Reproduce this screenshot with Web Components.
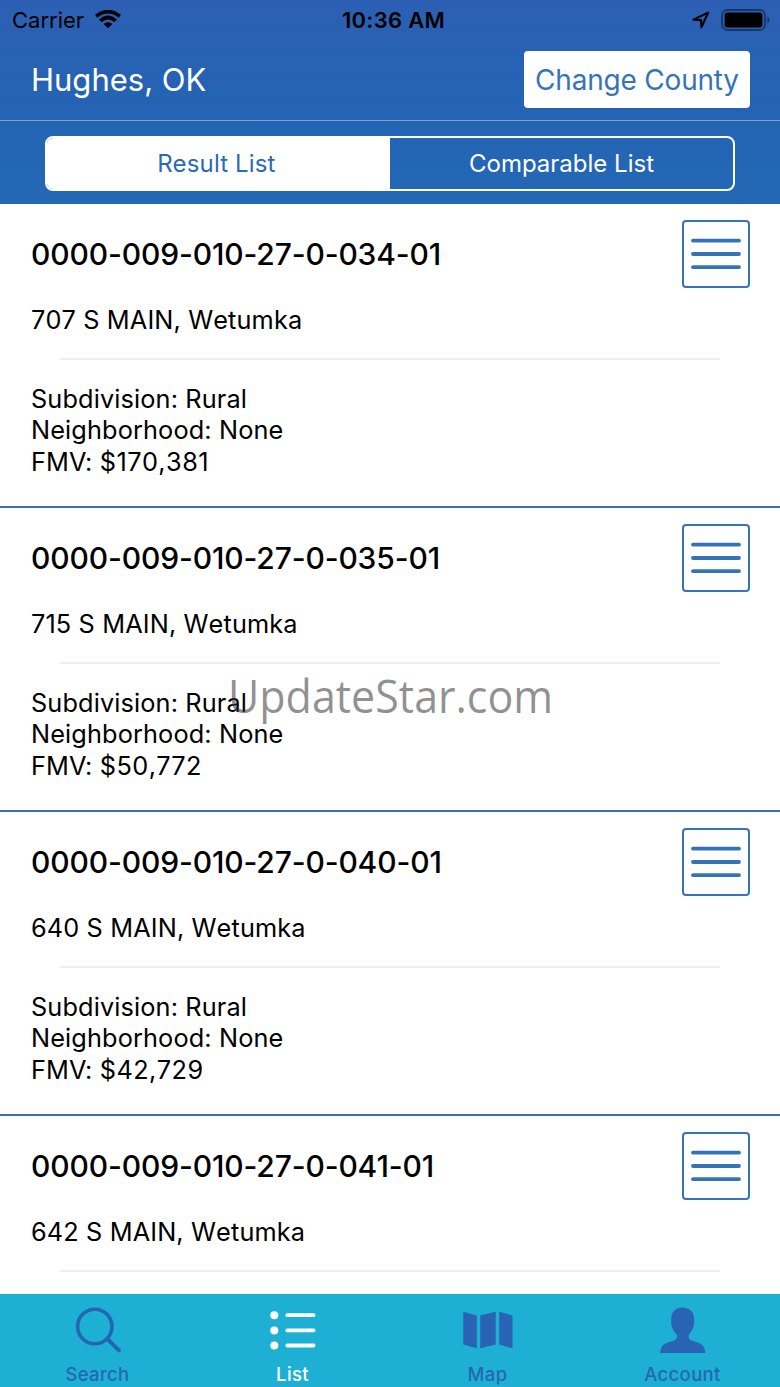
<!DOCTYPE html>
<html lang="en">
<head>
<meta charset="utf-8">
<title>Hughes, OK</title>
<style>
    html, body {
        margin: 0;
        height: 100%;
        overflow: hidden;
        background: #fff;
    }
</style>
</head>
<body>
<county-app></county-app>

<script>
function define(name, html, setup) {
    const template = document.createElement('template');
    template.innerHTML = html;
    customElements.define(name, class extends HTMLElement {
        constructor() {
            super();
            this.root = this.attachShadow({ mode: 'open' });
            this.root.appendChild(template.content.cloneNode(true));
        }
        connectedCallback() {
            if (setup) setup(this.root, this);
        }
    });
}

define('status-bar', `
<style>
    :host {
        display: grid;
        grid-template-columns: 1fr auto 1fr;
        align-items: center;
        height: 40px;
        padding: 0 10px 0 12px;
        color: #000;
        font-size: 22px;
    }
    .left, .right { display: flex; align-items: center; }
    .left { gap: 11px; }
    .right { justify-content: flex-end; gap: 11px; }
    .time { padding-left: 5px; font-weight: 600; letter-spacing: 0.3px; }
    svg { display: block; }
</style>
<div class="left">
    <span>Carrier</span>
    <svg width="26" height="20" viewBox="0 1 26 20">
        <g fill="none" stroke="#000" stroke-width="3.8">
            <path d="M1.2 7.2Q13 -2 24.8 7.2"/>
            <path d="M5.3 11.9Q13 5.2 20.7 11.9"/>
        </g>
        <path d="M8.6 15Q13 11.4 17.4 15L13 19.2Z"/>
    </svg>
</div>
<div class="time">10:36 AM</div>
<div class="right">
    <svg width="18" height="18" viewBox="0 0 18 18">
        <path d="M1.4 8.6L16.2 1.6L9.4 16.2L9 9.1Z" fill="none" stroke="#000" stroke-width="2.1" stroke-linejoin="round"/>
    </svg>
    <svg width="49" height="22" viewBox="0 0 49 22">
        <rect x="1" y="1" width="43" height="20" rx="5.5" fill="none" stroke="#173765" stroke-width="1.8"/>
        <rect x="3.6" y="3.6" width="37.8" height="14.8" rx="3"/>
        <path d="M46.3 7.6Q48.7 8.8 48.7 11T46.3 14.4Z" fill="#173765"/>
    </svg>
</div>
`);

define('county-header', `
<style>
    :host {
        display: flex;
        align-items: center;
        justify-content: space-between;
        box-sizing: border-box;
        height: 81px;
        padding: 0 30px 1px 31px;
        border-bottom: 1px solid #7b9fd1;
        color: #fff;
    }
    .name { font-size: 31px; }
    button {
        box-sizing: border-box;
        width: 226px;
        height: 57px;
        padding: 0;
        border: 0;
        border-radius: 4px;
        background: #fff;
        color: #3773b9;
        font: inherit;
        font-size: 28px;
        letter-spacing: -0.2px;
    }
</style>
<div class="name"><slot></slot></div>
<button>Change County</button>
`);

define('list-switch', `
<style>
    :host {
        display: flex;
        box-sizing: border-box;
        height: 83px;
        padding: 15px 45px 13px;
    }
    .box {
        flex: 1;
        display: grid;
        grid-template-columns: 1fr 1fr;
        border: 2px solid #fff;
        border-radius: 8px;
        overflow: hidden;
        color: #fff;
        font-size: 24px;
    }
    .box div { display: grid; place-items: center; }
    .box .on { padding-right: 4px; background: #fff; color: #2b6ab7; letter-spacing: 0.15px; }
</style>
<div class="box">
    <div class="on"><span>Result List</span></div>
    <div class="off"><span>Comparable List</span></div>
</div>
`);

define('menu-button', `
<style>
    :host {
        display: grid;
        place-items: center;
        box-sizing: border-box;
        width: 68px;
        height: 68px;
        border: 2px solid #3573be;
        border-radius: 4px;
    }
</style>
<svg width="50" height="32" viewBox="0 0 50 32">
    <path d="M2 2.7H48M2 16H48M2 29.2H48" stroke="#3573b9" stroke-width="3.8" stroke-linecap="round"/>
</svg>
`);

define('parcel-item', `
<style>
    :host {
        display: block;
        box-sizing: border-box;
        height: 304px;
        padding: 16px 30px 0 31px;
        border-bottom: 2px solid #3a6fb8;
        color: #000;
    }
    .top { display: flex; justify-content: space-between; align-items: center; }
    .id { font-size: 30px; font-weight: 500; letter-spacing: -0.13px; }
    .address, .facts { font-size: 25.3px; letter-spacing: 0.13px; }
    .address { margin-top: 16px; line-height: 32px; }
    hr { margin: 22px 30px 23px 29px; border: 0; height: 2px; background: #ededee; }
    .facts { line-height: 31.4px; }
    .address, .amount { font-kerning: none; }
    .amount { letter-spacing: 0.45px; }
</style>
<div class="top">
    <div class="id"></div>
    <menu-button></menu-button>
</div>
<div class="address"><slot></slot></div>
<hr>
<div class="facts">
    <div>Subdivision: Rural</div>
    <div>Neighborhood: None</div>
    <div>FMV: <span class="amount"></span></div>
</div>
`, (root, el) => {
    root.querySelector('.id').textContent = el.getAttribute('parcel');
    // no value yet: leave the lower half empty
    if (el.hasAttribute('fmv')) {
        root.querySelector('.amount').textContent = el.getAttribute('fmv');
    } else {
        root.querySelector('.facts').remove();
    }
});

define('tab-item', `
<style>
    :host {
        display: flex;
        flex-direction: column;
        align-items: center;
        padding-top: 11px;
        color: #2767b2;
        font-size: 18.5px;
        font-weight: 500;
        letter-spacing: 0.35px;
    }
    :host([active]) { color: #fff; }
    .icon { height: 50px; }
    .label { margin-top: 7px; line-height: 24px; }
</style>
<div class="icon"><slot name="icon"></slot></div>
<div class="label"><slot></slot></div>
`);

define('tab-bar', `
<style>
    :host {
        display: grid;
        grid-template-columns: repeat(4, 1fr);
        height: 93px;
        background: #1eb0d4;
    }
    svg { display: block; }
</style>
<tab-item>
    <svg slot="icon" width="52" height="50" viewBox="0 0 52 50" fill="none" stroke="#2565b4" stroke-width="3.6" stroke-linecap="round">
        <circle cx="22.8" cy="21.5" r="17.2"/>
        <path d="M35.5 34L47 45.4" stroke-width="4"/>
    </svg>
    Search
</tab-item>
<tab-item active>
    <svg slot="icon" width="46" height="50" viewBox="0 0 46 50" fill="#fff">
        <circle cx="4.3" cy="10.2" r="4"/>
        <circle cx="4.3" cy="25.4" r="4"/>
        <circle cx="4.3" cy="40.5" r="4"/>
        <path d="M17.3 10.2H43.6M17.3 25.4H43.6M17.3 40.5H43.6" stroke="#fff" stroke-width="3.8" stroke-linecap="round"/>
    </svg>
    List
</tab-item>
<tab-item>
    <svg slot="icon" width="50" height="50" viewBox="0 0 50 50" fill="#2863b4">
        <path d="M.3 6.8L13.8 10.5V43.2L.3 39.4Z"/>
        <path d="M17.2 10.5L32.7 6.8V39.4L17.2 43.2Z"/>
        <path d="M36.2 6.8L49.5 10.5V43.4L36.2 39.4Z"/>
    </svg>
    Map
</tab-item>
<tab-item>
    <svg slot="icon" width="46" height="50" viewBox="0 0 46 50" fill="#2863b4">
        <path d="M22.5 2.5C28.5 2.5 34 6.5 34 13C34 16 34.5 17 33.9 20C33.3 23.5 31 27 28.5 30C28.5 32 28.8 34 30.5 35C35 37.5 45.3 37 45.3 48H.3C.3 37 10.6 37.5 15.1 35C16.8 34 17 32 17 30C14 27 12 23.5 11.5 20C11 17 11.3 16 11.3 13C11.3 6.5 16.5 2.5 22.5 2.5Z"/>
    </svg>
    Account
</tab-item>
`);

define('county-app', `
<style>
    :host {
        display: flex;
        flex-direction: column;
        position: relative;
        width: 780px;
        height: 1387px;
        overflow: hidden;
        font-family: Inter, "Liberation Sans", sans-serif;
    }
    header { background: linear-gradient(#2c5fb3, #2463b3 50%, #2368b5); }
    main { flex: 1; min-height: 0; overflow: hidden; }
    .watermark {
        position: absolute;
        left: 228px;
        top: 664px;
        font: 45px/64px "Open Sans", "Noto Sans", sans-serif;
        color: rgba(60, 60, 60, 0.57);
        white-space: nowrap;
        transform: scaleX(0.955);
        transform-origin: left;
    }
</style>
<header>
    <status-bar></status-bar>
    <county-header>Hughes, OK</county-header>
    <list-switch></list-switch>
</header>
<main>
    <parcel-item parcel="0000-009-010-27-0-034-01" fmv="$170,381">707 S MAIN, Wetumka</parcel-item>
    <parcel-item parcel="0000-009-010-27-0-035-01" fmv="$50,772">715 S MAIN, Wetumka</parcel-item>
    <parcel-item parcel="0000-009-010-27-0-040-01" fmv="$42,729">640 S MAIN, Wetumka</parcel-item>
    <parcel-item parcel="0000-009-010-27-0-041-01">642 S MAIN, Wetumka</parcel-item>
</main>
<tab-bar></tab-bar>
<div class="watermark">UpdateStar.com</div>
`);
</script>
</body>
</html>
